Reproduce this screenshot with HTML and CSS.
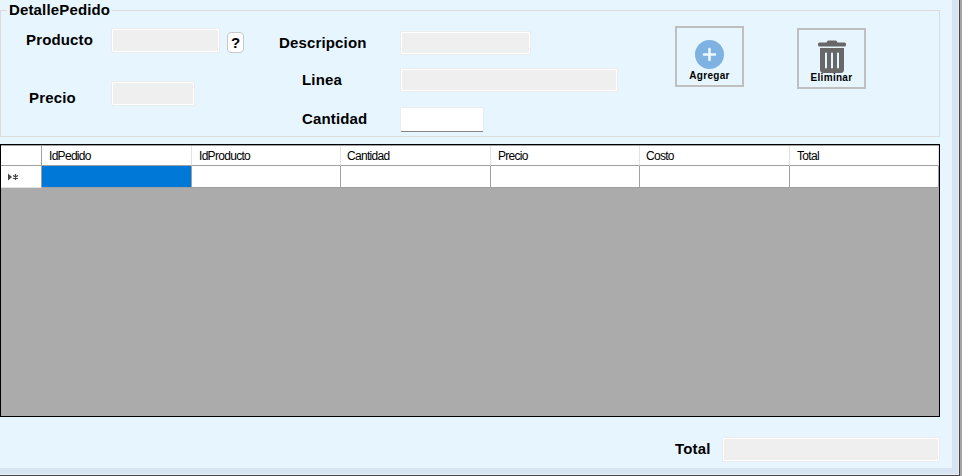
FILE: index.html
```html
<!DOCTYPE html>
<html lang="es">
<head>
<meta charset="utf-8">
<title>DetallePedido</title>
<link rel="stylesheet" href="styles.css">
</head>
<body>
<main class="window">
  <section class="group">
    <h1 class="legend">DetallePedido</h1>
    <div class="fields">
      <div class="row product">
        <label>Producto</label><span class="box"></span><button class="help">?</button>
      </div>
      <div class="row price"><label>Precio</label><span class="box"></span></div>
    </div>
    <div class="details">
      <div class="row description"><label>Descripcion</label><span class="box"></span></div>
      <div class="row line"><label>Linea</label><span class="box"></span></div>
      <div class="row quantity"><label>Cantidad</label><span class="box editable"></span></div>
    </div>
    <div class="actions">
      <button class="action add">
        <svg width="29" height="29" viewBox="0 0 29 29"><circle cx="14.500" cy="14.500" r="14.500" fill="#7db2e2"/><path d="M14.500 9v11M9 14.500h11" stroke="#eef8ff" stroke-width="2.600" stroke-linecap="round"/></svg>
        <span>Agregar</span>
      </button>
      <button class="action remove">
        <svg width="28" height="33" viewBox="0 0 28 33"><path d="M8.500 2.500Q9 .5 10.500.5h7q1.500 0 2 2h7Q28 2.500 28 4v1q0 1.500-1.500 1.500h-25Q0 6.500 0 5V4q0-1.500 1.500-1.500z" fill="#686868"/><path d="M2 8h24v21.500q0 3.500-3.500 3.500h-17Q2 33 2 29.500z" fill="#686868"/><path d="M8 13.500v14M14 13.500v14M20 13.500v14" stroke="#e7f6fe" stroke-width="2" stroke-linecap="round"/></svg>
        <span>Eliminar</span>
      </button>
    </div>
  </section>
  <section class="datagrid">
    <table>
      <colgroup><col class="marker"><col class="c150"><col class="c149"><col class="c150"><col class="c149"><col class="c150"><col></colgroup>
      <thead><tr><th></th><th>IdPedido</th><th>IdProducto</th><th class="near">Cantidad</th><th>Precio</th><th class="near">Costo</th><th>Total</th></tr></thead>
      <tbody><tr>
        <td><svg class="mark" width="12" height="8" viewBox="0 0 12 8"><path d="M0 .5 4 4 0 7.500z" fill="#444"/><path d="M7.500 1v6M5 2.500l5 3M10 2.500l-5 3" stroke="#444" stroke-width="1.200"/></svg></td>
        <td class="selected"></td><td></td><td></td><td></td><td></td><td></td>
      </tr></tbody>
    </table>
  </section>
  <footer class="row total"><label>Total</label><span class="box"></span></footer>
</main>
</body>
</html>
```
FILE: styles.css
```css
* { box-sizing: border-box; }
body {
  margin: 0;
  width: 962px;
  height: 476px;
  overflow: hidden;
  background: #a5a5a5;
  font: bold 15px/18px "Liberation Sans", Arial, sans-serif;
  letter-spacing: .15px;
  color: #000;
}
.window {
  width: 960px;
  height: 476px;
  padding-top: 10px;
  background: #e7f6fe;
  border-right: 1px solid #4a454b;
  border-bottom: 1px solid #4a454b;
  box-shadow: inset -1px -1px #e9eef6, inset -7px -7px #d7e4f2;
}
.group {
  display: grid;
  grid-template-columns: 278px 396px 1fr;
  grid-template-rows: 8px 1fr;
  width: 940px;
  height: 127px;
  border: 1px solid #dcdcdc;
  margin-bottom: 7px;
}
.legend {
  grid-column: 1 / -1;
  justify-self: start;
  margin: -10px 0 0 6px;
  padding: 0 2px;
  height: 18px;
  font: inherit;
  background: #e7f6fe;
}
.row { display: flex; align-items: flex-start; }
.box {
  flex: none;
  height: 25px;
  background: #efefef;
  border: 1px solid #ececec;
  box-shadow: inset 0 0 0 1px #fff;
  border-radius: 2px;
}
.product { margin: 9px 0 0 25px; }
.product label { width: 85px; padding-top: 3px; }
.product .box { width: 109px; }
.help {
  width: 17px;
  height: 21px;
  margin: 4px 0 0 7px;
  padding: 0;
  border: 1px solid #c8c8c8;
  border-radius: 4px;
  background: #fdfdfd;
  color: #000;
  font: inherit;
}
.price { margin: 28px 0 0 28px; }
.price label { width: 82px; padding-top: 8px; }
.price .box { width: 84px; }
.description { margin-top: 12px; }
.description label { width: 121px; padding-top: 3px; }
.description .box { width: 131px; height: 24px; }
.line { margin: 13px 0 0 23px; }
.line label, .quantity label { width: 98px; padding-top: 3px; }
.line .box { width: 218px; height: 24px; }
.quantity { margin: 15px 0 0 23px; }
.quantity .box { width: 84px; }
.editable { background: #fff; border-bottom-color: #858585; }
.actions { display: flex; gap: 53px; padding-top: 7px; }
.action {
  display: flex;
  flex-direction: column;
  align-items: center;
  width: 69px;
  height: 61px;
  padding: 0;
  border: 2px solid #bfbfbf;
  background: transparent;
  color: #000;
  font: bold 10px/11px "Liberation Sans", Arial, sans-serif;
  letter-spacing: .3px;
}
.add svg { margin: 12px 1px 0 0; }
.remove { margin-top: 2px; }
.remove svg { margin: 10px 0 0 1px; }
.add span { margin-top: 1px; }
.remove span { margin-top: -1px; }
.datagrid {
  width: 940px;
  height: 273px;
  border: 1px solid #000;
  background: #ababab;
}
table {
  width: 938px;
  border-collapse: separate;
  border-spacing: 0;
  table-layout: fixed;
  background: #fff;
  border-top: 1px solid #a0a0a0;
}
.marker { width: 41px; }
.c150 { width: 150px; }
.c149 { width: 149px; }
th, td {
  padding: 0;
  border-right: 1px solid #a0a0a0;
  border-bottom: 1px solid #a0a0a0;
}
th {
  height: 20px;
  padding-left: 7px;
  text-align: left;
  font: 12px/14px "Liberation Sans", Arial, sans-serif;
  letter-spacing: -.7px;
  border-right-color: #e2e2e2;
}
th.near { padding-left: 6px; }
th:first-child { border-right-color: #a0a0a0; }
td { height: 22px; }
td:first-child { border-bottom-color: #e2e2e2; }
.mark { display: block; margin: 1px 0 0 7px; }
.selected { background: #0078d7; }
.total { margin: 20px 0 0 675px; }
.total label { width: 47px; padding-top: 3px; }
.total .box { width: 218px; }
```
